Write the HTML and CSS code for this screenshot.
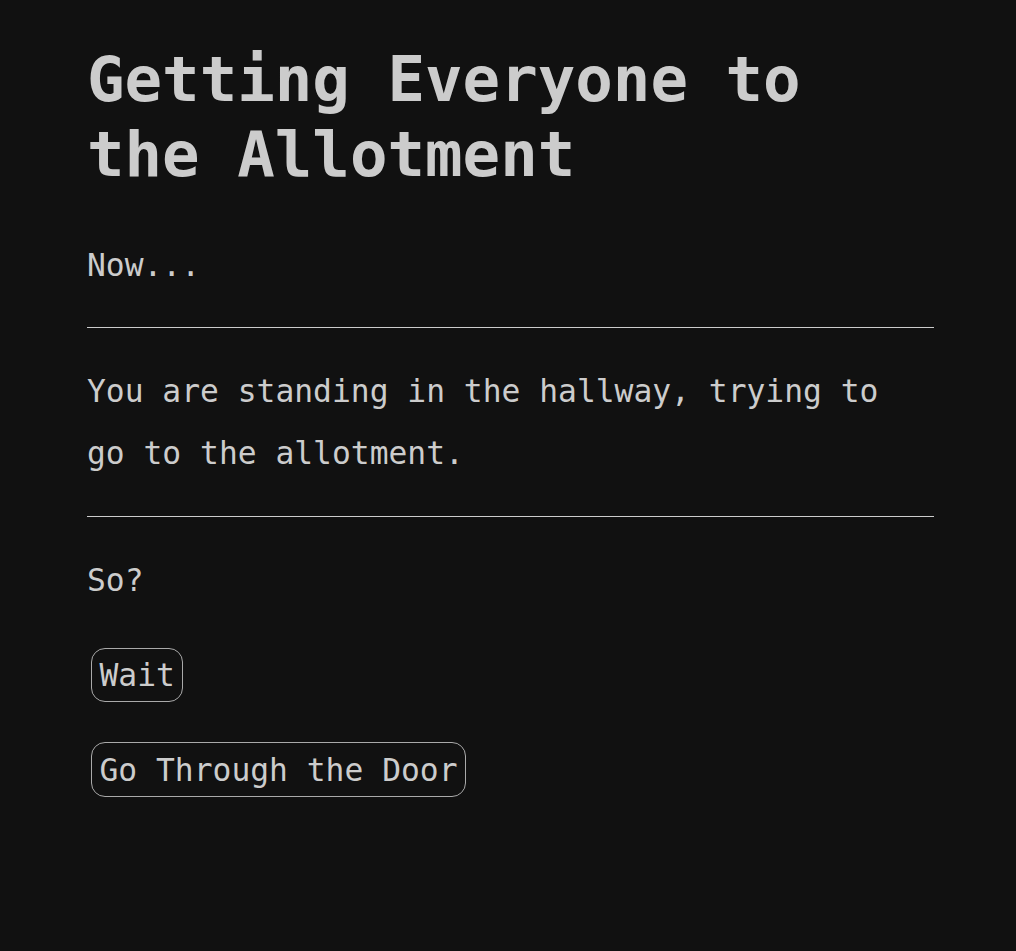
FILE: index.html
```html
<!DOCTYPE html>
<html lang="en">
<head>
<meta charset="utf-8">
<title>Getting Everyone to the Allotment</title>
<link rel="stylesheet" href="styles.css">
</head>
<body>
<main class="story">
  <h1 class="title">Getting Everyone to the Allotment</h1>
  <p class="text">Now...</p>
  <hr class="rule">
  <p class="text">You are standing in the hallway, trying to go to the allotment.</p>
  <hr class="rule">
  <p class="text">So?</p>
  <div class="choices">
    <button class="choice">Wait</button>
    <button class="choice">Go Through the Door</button>
  </div>
</main>
</body>
</html>
```

FILE: styles.css
```css
html, body {
  margin: 0;
  background: #111111;
}
body {
  color: #cccccc;
  font-family: "DejaVu Sans Mono", "Liberation Mono", monospace;
}
.story {
  width: 847px;
  margin-left: 87px;
  padding-top: 43px;
}
.title {
  margin: 0 0 41px;
  font-size: 62.4px;
  line-height: 1.2;
  font-weight: bold;
}
.text {
  margin: 0;
  padding-right: 12px;
  font-size: 31.3px;
  line-height: 2;
}
.rule {
  margin: 31px 0 31.5px;
  border: none;
  border-top: 1px solid #cccccc;
  height: 0;
}
.choices {
  display: flex;
  flex-direction: column;
  align-items: flex-start;
  gap: 40px;
  margin-top: 36.5px;
  padding-left: 4px;
}
.choice {
  font-family: "DejaVu Sans Mono", "Liberation Mono", monospace;
  font-size: 31.3px;
  line-height: normal;
  color: #cccccc;
  background: #111111;
  border: 1px solid #aaaaaa;
  border-radius: 14px;
  padding: 8.4px 7.5px;
  margin: 0;
}
```
